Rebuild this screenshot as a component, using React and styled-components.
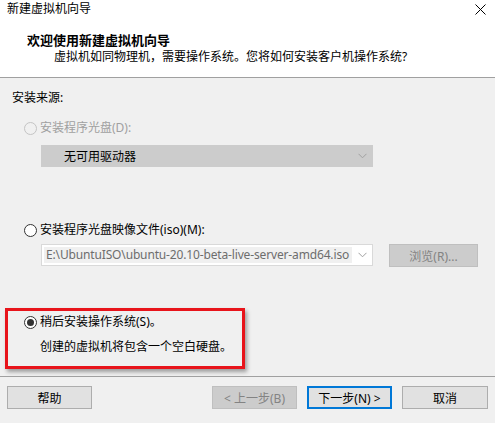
import React from "react";
import styled, { createGlobalStyle } from "styled-components";

const Global = createGlobalStyle`
  html, body { margin: 0; padding: 0; }
  body { background: #f0f0f0; font-family: "Noto Sans", "Noto Sans CJK SC", sans-serif; font-size: 12px; color: #000; }
`;

const Window = styled.div`
  width: 495px;
  height: 423px;
  background: #f0f0f0;
  display: flex;
  flex-direction: column;
  overflow: hidden;
`;

const Header = styled.div`
  background: #fff;
  height: 77px;
  border-bottom: 1px solid #a0a0a0;
  display: flex;
  flex-direction: column;
`;

const TitleBar = styled.div`
  height: 18px;
  display: flex;
  align-items: center;
  justify-content: space-between;
  padding: 0 9px 0 7px;
  line-height: 18px;
`;

const TitleText = styled.span`
  font-size: 12px;
`;

const Heading = styled.div`
  margin-top: 14px;
  padding-left: 27px;
  font-size: 13px;
  font-weight: 700;
  line-height: 16px;
`;

const Subtitle = styled.div`
  margin-top: 1px;
  padding-left: 54px;
  line-height: 16px;
`;

const Body = styled.div`
  flex: 1;
  padding: 0 12px;
  display: flex;
  flex-direction: column;
  align-items: flex-start;
`;

const SectionLabel = styled.div`
  margin-top: 12px;
  line-height: 16px;
`;

const OptionRow = styled.div`
  display: flex;
  align-items: center;
  gap: 3px;
  line-height: 16px;
  margin-top: ${(p) => p.$mt || 0}px;
  padding-left: ${(p) => p.$pl ?? 12}px;
  color: ${(p) => (p.$disabled ? "#a0a0a0" : "#000")};
`;

const RadioCircle = styled.span`
  width: 11px;
  height: 11px;
  border-radius: 50%;
  border: 1px solid ${(p) => (p.$disabled ? "#c4c4c4" : "#333")};
  background: ${(p) => (p.$disabled ? "#f0f0f0" : "#fff")};
  display: inline-flex;
  align-items: center;
  justify-content: center;
  flex-shrink: 0;
`;

const RadioDot = styled.span`
  width: 7px;
  height: 7px;
  border-radius: 50%;
  background: #333;
`;

const Select = styled.div`
  margin-top: ${(p) => p.$mt || 0}px;
  margin-left: 29px;
  width: 332px;
  height: 22px;
  box-sizing: border-box;
  background: #cccccc;
  border: 1px solid #cccccc;
  display: flex;
  align-items: center;
  justify-content: space-between;
  padding: 0 5px 0 22px;
`;

const ComboRow = styled.div`
  margin-top: 6px;
  margin-left: 29px;
  display: flex;
  gap: 16px;
`;

const Combo = styled.div`
  width: 332px;
  height: 22px;
  box-sizing: border-box;
  background: #fff;
  border: 1px solid #d9d9d9;
  display: flex;
  align-items: center;
  justify-content: space-between;
  padding: 0 5px 0 2px;
`;

const ComboText = styled.span`
  background: #f0f0f0;
  color: #6d6d6d;
  line-height: 16px;
  padding: 0 3px 0 2px;
  white-space: nowrap;
  letter-spacing: -0.15px;
`;

const Button = styled.div`
  width: ${(p) => p.$w || 85}px;
  height: 23px;
  box-sizing: border-box;
  display: flex;
  align-items: center;
  justify-content: center;
  background: ${(p) => (p.$disabled ? "#cccccc" : "#e1e1e1")};
  border: ${(p) => (p.$default ? "2px solid #0078d7" : p.$disabled ? "1px solid #bfbfbf" : "1px solid #adadad")};
  color: ${(p) => (p.$disabled ? "#838383" : "#000")};
  white-space: nowrap;
`;

const Highlight = styled.div`
  margin-top: 41px;
  margin-left: -7px;
  width: 240px;
  height: 61px;
  box-sizing: border-box;
  border: 3px solid #e8141b;
  box-shadow: 2px 3px 4px rgba(0, 0, 0, 0.35);
  display: flex;
  flex-direction: column;
`;

const Note = styled.div`
  margin-top: 9px;
  padding-left: 32px;
  line-height: 16px;
`;

const Footer = styled.div`
  height: 37px;
  border-top: 1px solid #a0a0a0;
  display: flex;
  align-items: flex-start;
  padding: 9px 7px 0 7px;
  gap: 10px;
`;

const Spacer = styled.div`
  flex: 1;
`;

const Chevron = () => (
  <svg width="9" height="6" viewBox="0 0 9 6">
    <path d="M0.5 0.8 L4.5 4.8 L8.5 0.8" fill="none" stroke="#a0a0a0" strokeWidth="1" />
  </svg>
);

const CloseIcon = () => (
  <svg width="11" height="11" viewBox="0 0 11 11">
    <path d="M0.5 0.5 L10.5 10.5 M10.5 0.5 L0.5 10.5" stroke="#000" strokeWidth="1" />
  </svg>
);

const Radio = ({ checked, disabled }) => (
  <RadioCircle $disabled={disabled}>{checked && <RadioDot />}</RadioCircle>
);

export default function App() {
  return (
    <>
      <Global />
      <Window>
        <Header>
          <TitleBar>
            <TitleText>新建虚拟机向导</TitleText>
            <CloseIcon />
          </TitleBar>
          <Heading>欢迎使用新建虚拟机向导</Heading>
          <Subtitle>虚拟机如同物理机，需要操作系统。您将如何安装客户机操作系统?</Subtitle>
        </Header>
        <Body>
          <SectionLabel>安装来源:</SectionLabel>
          <OptionRow $mt={14} $disabled>
            <Radio disabled />
            <span>安装程序光盘(D):</span>
          </OptionRow>
          <Select $mt={9}>
            <span>无可用驱动器</span>
            <Chevron />
          </Select>
          <OptionRow $mt={55}>
            <Radio />
            <span>安装程序光盘映像文件(iso)(M):</span>
          </OptionRow>
          <ComboRow>
            <Combo>
              <ComboText>E:\UbuntuISO\ubuntu-20.10-beta-live-server-amd64.iso</ComboText>
              <Chevron />
            </Combo>
            <Button $w={89} $disabled>浏览(R)...</Button>
          </ComboRow>
          <Highlight>
            <OptionRow $mt={3} $pl={16}>
              <Radio checked />
              <span>稍后安装操作系统(S)。</span>
            </OptionRow>
            <Note>创建的虚拟机将包含一个空白硬盘。</Note>
          </Highlight>
        </Body>
        <Footer>
          <Button>帮助</Button>
          <Spacer />
          <Button $disabled>&lt; 上一步(B)</Button>
          <Button $default>下一步(N) &gt;</Button>
          <Button $w={86}>取消</Button>
        </Footer>
      </Window>
    </>
  );
}
